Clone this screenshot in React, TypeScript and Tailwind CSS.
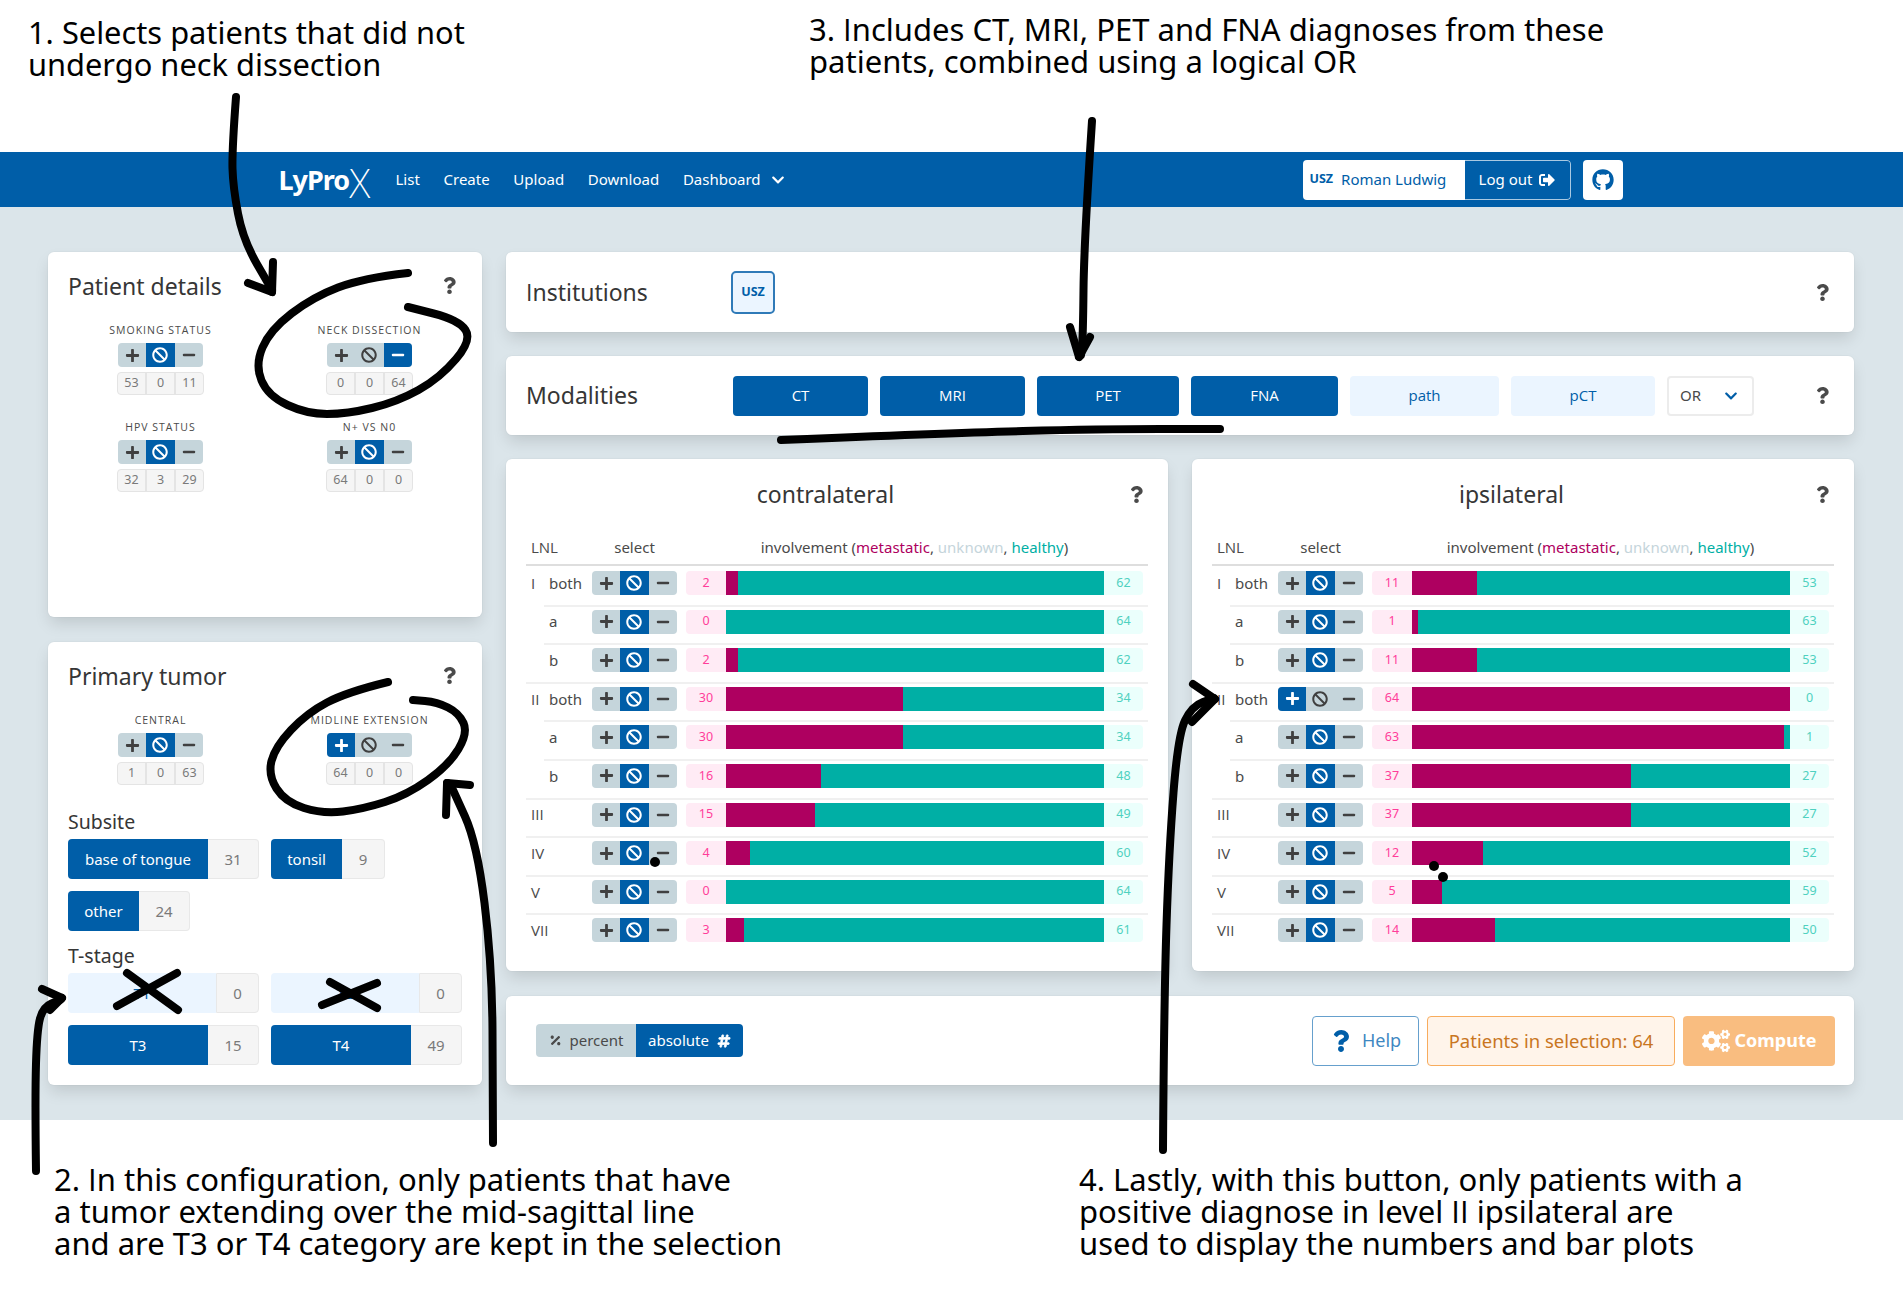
import { FaBan, FaChevronDown, FaCogs, FaGithub, FaHashtag, FaMinus, FaPercentage, FaPlus, FaQuestion, FaSignOutAlt } from "react-icons/fa";

type Choice = "plus" | "ban" | "minus";
type Row = [string, string, number, number, Choice?];

const contralateral: Row[] = [
  ["I", "both", 2, 62],
  ["", "a", 0, 64],
  ["", "b", 2, 62],
  ["II", "both", 30, 34],
  ["", "a", 30, 34],
  ["", "b", 16, 48],
  ["III", "", 15, 49],
  ["IV", "", 4, 60],
  ["V", "", 0, 64],
  ["VII", "", 3, 61],
];

const ipsilateral: Row[] = [
  ["I", "both", 11, 53],
  ["", "a", 1, 63],
  ["", "b", 11, 53],
  ["II", "both", 64, 0, "plus"],
  ["", "a", 63, 1],
  ["", "b", 37, 27],
  ["III", "", 37, 27],
  ["IV", "", 12, 52],
  ["V", "", 5, 59],
  ["VII", "", 14, 50],
];

const card = "rounded-[6px] bg-white shadow-[0_8px_16px_-2px_rgba(10,10,10,0.13),0_0_0_1px_rgba(10,10,10,0.02)]";

// Noto's capital I has slab serifs, the picture's has none
const plainCaps = "font-['Open_Sans',sans-serif]";

function Caps({ children }: { children: string }) {
  return <span className={plainCaps}>{children}</span>;
}

// rounds a list of points off into a hand drawn looking line
function smooth(points: number[][]) {
  let d = `M${points[0][0]} ${points[0][1]}`;
  for (let i = 1; i < points.length - 1; i++) {
    const mx = (points[i][0] + points[i + 1][0]) / 2;
    const my = (points[i][1] + points[i + 1][1]) / 2;
    d += ` Q${points[i][0]} ${points[i][1]} ${mx} ${my}`;
  }
  const last = points[points.length - 1];
  return d + ` L${last[0]} ${last[1]}`;
}

const scribbles: number[][][] = [
  // arrow 1
  [[236, 97], [232, 150], [233, 187], [243, 240], [272, 290]],
  [[248, 283], [272, 292]],
  [[273, 262], [272, 292]],
  // neck dissection circle
  [[408, 273], [363, 278], [313, 297], [270, 330], [255, 365], [268, 396], [307, 414], [347, 414], [397, 402], [440, 378], [472, 340], [459, 320], [408, 307]],
  // midline circle
  [[388, 682], [347, 692], [307, 713], [275, 747], [268, 775], [285, 802], [323, 814], [363, 809], [407, 795], [449, 765], [468, 733], [459, 713], [437, 702], [413, 700]],
  // arrow 2 right
  [[493, 1143], [493, 1097], [492, 963], [477, 843], [453, 790]],
  [[470, 785], [447, 783]],
  [[446, 815], [447, 783]],
  // arrow 2 left
  [[36, 1171], [35, 1097], [37, 1030], [43, 1007], [60, 1000]],
  [[42, 989], [62, 998]],
  [[50, 1010], [62, 998]],
  // crosses on T1 and T2
  [[127, 973], [178, 1010]],
  [[117, 1006], [177, 973]],
  [[330, 982], [377, 1008]],
  [[322, 1005], [377, 983]],
  // arrow 3
  [[1092, 121], [1084, 243], [1083, 337], [1081, 355]],
  [[1070, 327], [1079, 357]],
  [[1090, 337], [1079, 357]],
  [[781, 440], [946, 433], [1100, 429], [1220, 429]],
  // arrow 4
  [[1163, 1150], [1164, 1000], [1169, 850], [1178, 735], [1192, 706], [1214, 698]],
  [[1193, 684], [1215, 699]],
  [[1192, 722], [1215, 699]],
];

function TriButton({ active = "ban" }: { active?: Choice }) {
  const cell = (name: Choice, icon: React.ReactNode) => (
    <div className={`flex h-[24px] w-[28.3px] items-center justify-center ${active === name ? "bg-[#005ea8] text-white" : "text-[#404040]"}`}>
      {icon}
    </div>
  );
  return (
    <div className="flex h-[24px] w-[85px] shrink-0 overflow-hidden rounded-[4px] bg-[#c5d5db]">
      {cell("plus", <FaPlus size={15} />)}
      {cell("ban", <FaBan size={16} />)}
      {cell("minus", <FaMinus size={14} />)}
    </div>
  );
}

function Stats({ values }: { values: number[] }) {
  return (
    <div className="mt-[5px] flex h-[23px] w-[87px] overflow-hidden rounded-[4px] border border-[#e4e4e4] bg-[#f5f5f5] text-[12.5px] text-[#7a7a7a]">
      {values.map((value, i) => (
        <div key={i} className={`flex flex-1 items-center justify-center ${i > 0 ? "border-l-2 border-[#e4e4e4]" : ""}`}>
          {value}
        </div>
      ))}
    </div>
  );
}

function Toggle({ label, values, active }: { label: string; values: number[]; active?: Choice }) {
  return (
    <div className="flex flex-col items-center">
      <p className={`${plainCaps} mb-[6px] h-[14px] whitespace-nowrap text-[10.5px] leading-[14px] tracking-[1px] text-[#4a4a4a] uppercase`}>{label}</p>
      <TriButton active={active} />
      <Stats values={values} />
    </div>
  );
}

function Tag({ label, count, width, countWidth, on = true }: { label: string; count: number; width: string; countWidth: string; on?: boolean }) {
  return (
    <div className="flex h-[40px]">
      <div className={`flex items-center justify-center rounded-l-[4px] text-[15px] ${width} ${on ? "bg-[#005ea8] text-white" : "bg-[#ebf5ff] text-[#005ea8]"}`}>{label}</div>
      <div className={`flex items-center justify-center rounded-r-[4px] border border-[#e8e8e8] bg-[#f5f5f5] text-[15px] text-[#7a7a7a] ${on ? "border-l-0" : ""} ${countWidth}`}>{count}</div>
    </div>
  );
}

function CardTitle({ title }: { title: string }) {
  return (
    <div className="flex h-[30px] items-center justify-between">
      <h2 className="text-[23px] leading-[30px] text-[#363636]">{title}</h2>
      <FaQuestion size={17} className="mr-[4px] mb-[2px] text-[#4a4a4a]" />
    </div>
  );
}

function PatientDetails() {
  return (
    <section className={`${card} h-[365px] px-[20px] pt-[19px]`}>
      <CardTitle title="Patient details" />
      <div className="-mx-[12px] mt-[22px] grid grid-cols-2 gap-y-[25px]">
        <Toggle label="Smoking status" values={[53, 0, 11]} />
        <Toggle label="Neck dissection" values={[0, 0, 64]} active="minus" />
        <Toggle label="HPV status" values={[32, 3, 29]} />
        <Toggle label="N+ vs N0" values={[64, 0, 0]} />
      </div>
    </section>
  );
}

function PrimaryTumor() {
  return (
    <section className={`${card} h-[443px] px-[20px] pt-[19px]`}>
      <CardTitle title="Primary tumor" />
      <div className="-mx-[12px] mt-[22px] grid grid-cols-2">
        <Toggle label="Central" values={[1, 0, 63]} />
        <Toggle label="Midline extension" values={[64, 0, 0]} active="plus" />
      </div>
      <h3 className="mt-[25px] h-[24px] text-[19.5px] leading-[24px] text-[#363636]">Subsite</h3>
      <div className="mt-[5px] flex gap-[12px]">
        <Tag label="base of tongue" count={31} width="w-[140px]" countWidth="w-[51px]" />
        <Tag label="tonsil" count={9} width="w-[71px]" countWidth="w-[43px]" />
      </div>
      <div className="mt-[12px] flex">
        <Tag label="other" count={24} width="w-[71px]" countWidth="w-[51px]" />
      </div>
      <h3 className="mt-[13px] h-[24px] text-[19.5px] leading-[24px] text-[#363636]">T-stage</h3>
      <div className="mt-[5px] flex gap-[12px]">
        <Tag label="T1" count={0} width="w-[148px]" countWidth="w-[43px]" on={false} />
        <Tag label="T2" count={0} width="w-[148px]" countWidth="w-[43px]" on={false} />
      </div>
      <div className="mt-[12px] flex gap-[12px]">
        <Tag label="T3" count={15} width="w-[140px]" countWidth="w-[51px]" />
        <Tag label="T4" count={49} width="w-[140px]" countWidth="w-[51px]" />
      </div>
    </section>
  );
}

function InvolvementRow({ row, first }: { row: Row; first: boolean }) {
  const [lnl, sub, metastatic, healthy, choice] = row;
  const share = (metastatic / (metastatic + healthy)) * 100;
  const line = first ? "border-t-2 border-transparent" : "border-t-2 border-[#f0f0f0]";
  return (
    <div className="flex h-[38.6px] text-[15px] text-[#4a4a4a]">
      <div className={`${plainCaps} flex w-[18px] shrink-0 items-center whitespace-nowrap pb-[6.6px] pl-[5px] ${lnl ? line : ""}`}>{lnl}</div>
      <div className={`flex flex-1 items-center pb-[6.6px] ${line}`}>
        <div className="w-[48px] shrink-0 pl-[5px]">{sub}</div>
        <TriButton active={choice} />
        <div className="ml-[9px] flex h-[24px] w-[40px] items-center justify-center rounded-l-[4px] bg-[#ffebf5] text-[12.5px] text-[#ff3d9a]">{metastatic}</div>
        <div className="flex h-[24px] w-[378px] bg-[#00afa5]">
          <div className="h-full bg-[#ae0060]" style={{ width: `${share}%` }} />
        </div>
        <div className="flex h-[24px] w-[39px] items-center justify-center rounded-r-[4px] bg-[#ebfffc] text-[12.5px] text-[#4fd1c0]">{healthy}</div>
      </div>
    </div>
  );
}

function SidePanel({ title, rows }: { title: string; rows: Row[] }) {
  return (
    <section className={`${card} h-[512px] px-[20px] pt-[20px]`}>
      <div className="flex h-[30px] items-center">
        <h2 className="flex-1 pl-[5px] text-center text-[23px] leading-[30px] text-[#363636]">{title}</h2>
        <FaQuestion size={17} className="mr-[3px] ml-[8px] text-[#4a4a4a]" />
      </div>
      <div className="mt-[21px] flex h-[36px] items-center border-b-2 border-[#dedede] text-[15px] text-[#4a4a4a]">
        <div className={`${plainCaps} w-[66px] shrink-0 pl-[5px]`}>LNL</div>
        <div className="w-[85px] shrink-0 text-center">select</div>
        <div className="ml-[9px] w-[457px] shrink-0 text-center">
          involvement (<span className="text-[#ae0060]">metastatic</span>, <span className="text-[#c5d5db]">unknown</span>, <span className="text-[#00afa5]">healthy</span>)
        </div>
      </div>
      {rows.map((row, i) => (
        <InvolvementRow key={i} row={row} first={i === 0} />
      ))}
    </section>
  );
}

function Modality({ label, width, on = true }: { label: string; width: string; on?: boolean }) {
  return (
    <div className={`${plainCaps} flex h-[40px] items-center justify-center rounded-[4px] text-[15px] ${width} ${on ? "bg-[#005ea8] text-white" : "bg-[#ebf5ff] text-[#005ea8]"}`}>
      {label}
    </div>
  );
}

function Navbar() {
  return (
    <nav className="h-[55px] bg-[#005ea8]">
      <div className="mx-auto flex h-full w-[1344px] items-center pr-[1px] text-[15px] text-white">
        <div className="-ml-[1px] flex w-[117px] items-center text-[27px] leading-none font-bold tracking-[-1px]">
          LyPro<span className="mt-[6px] text-[40px] font-extralight tracking-[-2px]">X</span>
        </div>
        <div className="flex items-center gap-[23.7px]">
          <span>List</span>
          <span>Create</span>
          <span>Upload</span>
          <span>Download</span>
          <span className="flex items-center gap-[10px]">
            Dashboard <FaChevronDown size={14} />
          </span>
        </div>
        <div className="ml-auto flex h-[40px] items-center gap-[12px]">
          <div className="flex h-[40px] w-[268px] overflow-hidden rounded-[4px]">
            <div className="flex w-[162px] items-center gap-[8px] bg-white pl-[7px] text-[#005ea8]">
              <span className="text-[12.5px] font-bold">USZ</span>
              <span>Roman Ludwig</span>
            </div>
            <div className="flex flex-1 items-center justify-center gap-[7px] rounded-r-[4px] border border-l-0 border-[#a9c9e2]">
              Log out <FaSignOutAlt size={16} />
            </div>
          </div>
          <div className="flex h-[40px] w-[40px] items-center justify-center rounded-[4px] bg-white text-[#005ea8]">
            <FaGithub size={22} />
          </div>
        </div>
      </div>
    </nav>
  );
}

export default function App() {
  return (
    <div className="relative h-[1300px] w-[1903px] overflow-hidden bg-white font-['Noto_Sans',sans-serif]">
      <header className="flex h-[152px] text-[30.8px] leading-[32px] text-black">
        <p className="w-[809px] pt-[16px] pl-[28px]">
          1. Selects patients that did not
          <br />
          undergo neck dissection
        </p>
        <p className="pt-[13px] text-[31px]">
          3. <Caps>I</Caps>ncludes CT, MR<Caps>I</Caps>, PET and FNA diagnoses from these
          <br />
          patients, combined using a logical OR
        </p>
      </header>

      <Navbar />

      <main className="grid h-[913px] grid-cols-[434px_1348px] gap-x-[24px] bg-[#dbe5ea] pt-[45px] pl-[48px]">
        <div className="flex flex-col gap-[25px]">
          <PatientDetails />
          <PrimaryTumor />
        </div>
        <div className="flex flex-col">
          <section className={`${card} flex h-[80px] items-center px-[20px]`}>
            <h2 className="w-[205px] text-[23px] text-[#363636]">
              <Caps>I</Caps>nstitutions
            </h2>
            <div className="flex h-[43px] w-[44px] items-center justify-center rounded-[5px] border-2 border-[#2f7ab8] bg-[#ebf5ff] text-[12.5px] font-bold text-[#005ea8]">USZ</div>
            <FaQuestion size={17} className="mr-[3px] ml-auto text-[#4a4a4a]" />
          </section>
          <section className={`${card} mt-[24px] flex h-[79px] items-center gap-[12px] px-[20px]`}>
            <h2 className="w-[195px] text-[23px] text-[#363636]">Modalities</h2>
            <Modality label="CT" width="w-[135px]" />
            <Modality label="MRI" width="w-[145px]" />
            <Modality label="PET" width="w-[142px]" />
            <Modality label="FNA" width="w-[147px]" />
            <Modality label="path" width="w-[149px]" on={false} />
            <Modality label="pCT" width="w-[144px]" on={false} />
            <div className="flex h-[40px] w-[87px] items-center justify-between rounded-[4px] border-2 border-[#ececec] pr-[14px] pl-[11px] text-[15px] text-[#4a4a4a]">
              OR <FaChevronDown size={14} className="text-[#005ea8]" />
            </div>
            <FaQuestion size={17} className="mr-[3px] ml-auto text-[#4a4a4a]" />
          </section>
          <div className="mt-[24px] grid grid-cols-2 gap-x-[24px]">
            <SidePanel title="contralateral" rows={contralateral} />
            <SidePanel title="ipsilateral" rows={ipsilateral} />
          </div>
          <section className={`${card} mt-[25px] flex h-[89px] items-center px-[30px]`}>
            <div className="flex h-[33px] w-[207px] overflow-hidden rounded-[4px] text-[15px]">
              <div className="flex w-[100px] items-center justify-center gap-[8px] bg-[#c5d5db] text-[#4a4a4a]">
                <FaPercentage size={13} /> percent
              </div>
              <div className="flex flex-1 items-center justify-center gap-[8px] bg-[#005ea8] text-white">
                absolute <FaHashtag size={14} className="stroke-current stroke-[30]" />
              </div>
            </div>
            <div className="mr-[-11px] ml-auto flex h-[50px] gap-[8px] text-[18px]">
              <div className="flex w-[107px] items-center justify-center gap-[10px] rounded-[4px] border border-[#66a0cd] text-[#3f88c2]">
                <FaQuestion size={22} className="text-[#005ea8]" /> Help
              </div>
              <div className="flex w-[248px] items-center justify-center whitespace-nowrap rounded-[4px] border border-[#f8ac5d] bg-[#fff4ea] text-[18.5px] text-[#c9761f]">Patients in selection: 64</div>
              <div className="flex w-[152px] items-center justify-center gap-[5px] rounded-[4px] bg-[#f9bd80] font-bold text-white">
                <FaCogs size={28} /> Compute
              </div>
            </div>
          </section>
        </div>
      </main>

      <footer className="flex text-[31px] leading-[32px] text-black">
        <p className="w-[1079px] pt-[43px] pl-[54px]">
          2. <Caps>I</Caps>n this configuration, only patients that have
          <br />
          a tumor extending over the mid-sagittal line
          <br />
          and are T3 or T4 category are kept in the selection
        </p>
        <p className="pt-[43px]">
          4. Lastly, with this button, only patients with a
          <br />
          positive diagnose in level <Caps>II</Caps> ipsilateral are
          <br />
          used to display the numbers and bar plots
        </p>
      </footer>

      {/* hand drawn annotations lying over the screenshot */}
      <svg className="pointer-events-none absolute inset-0" width="1903" height="1300" fill="none" stroke="black" strokeWidth="8" strokeLinecap="round" strokeLinejoin="round">
        {scribbles.map((points, i) => (
          <path key={i} d={smooth(points)} />
        ))}
        <g fill="black" stroke="none">
          <circle cx="655" cy="862" r="5" />
          <circle cx="1434" cy="866" r="5" />
          <circle cx="1443" cy="877" r="5" />
        </g>
      </svg>
    </div>
  );
}
